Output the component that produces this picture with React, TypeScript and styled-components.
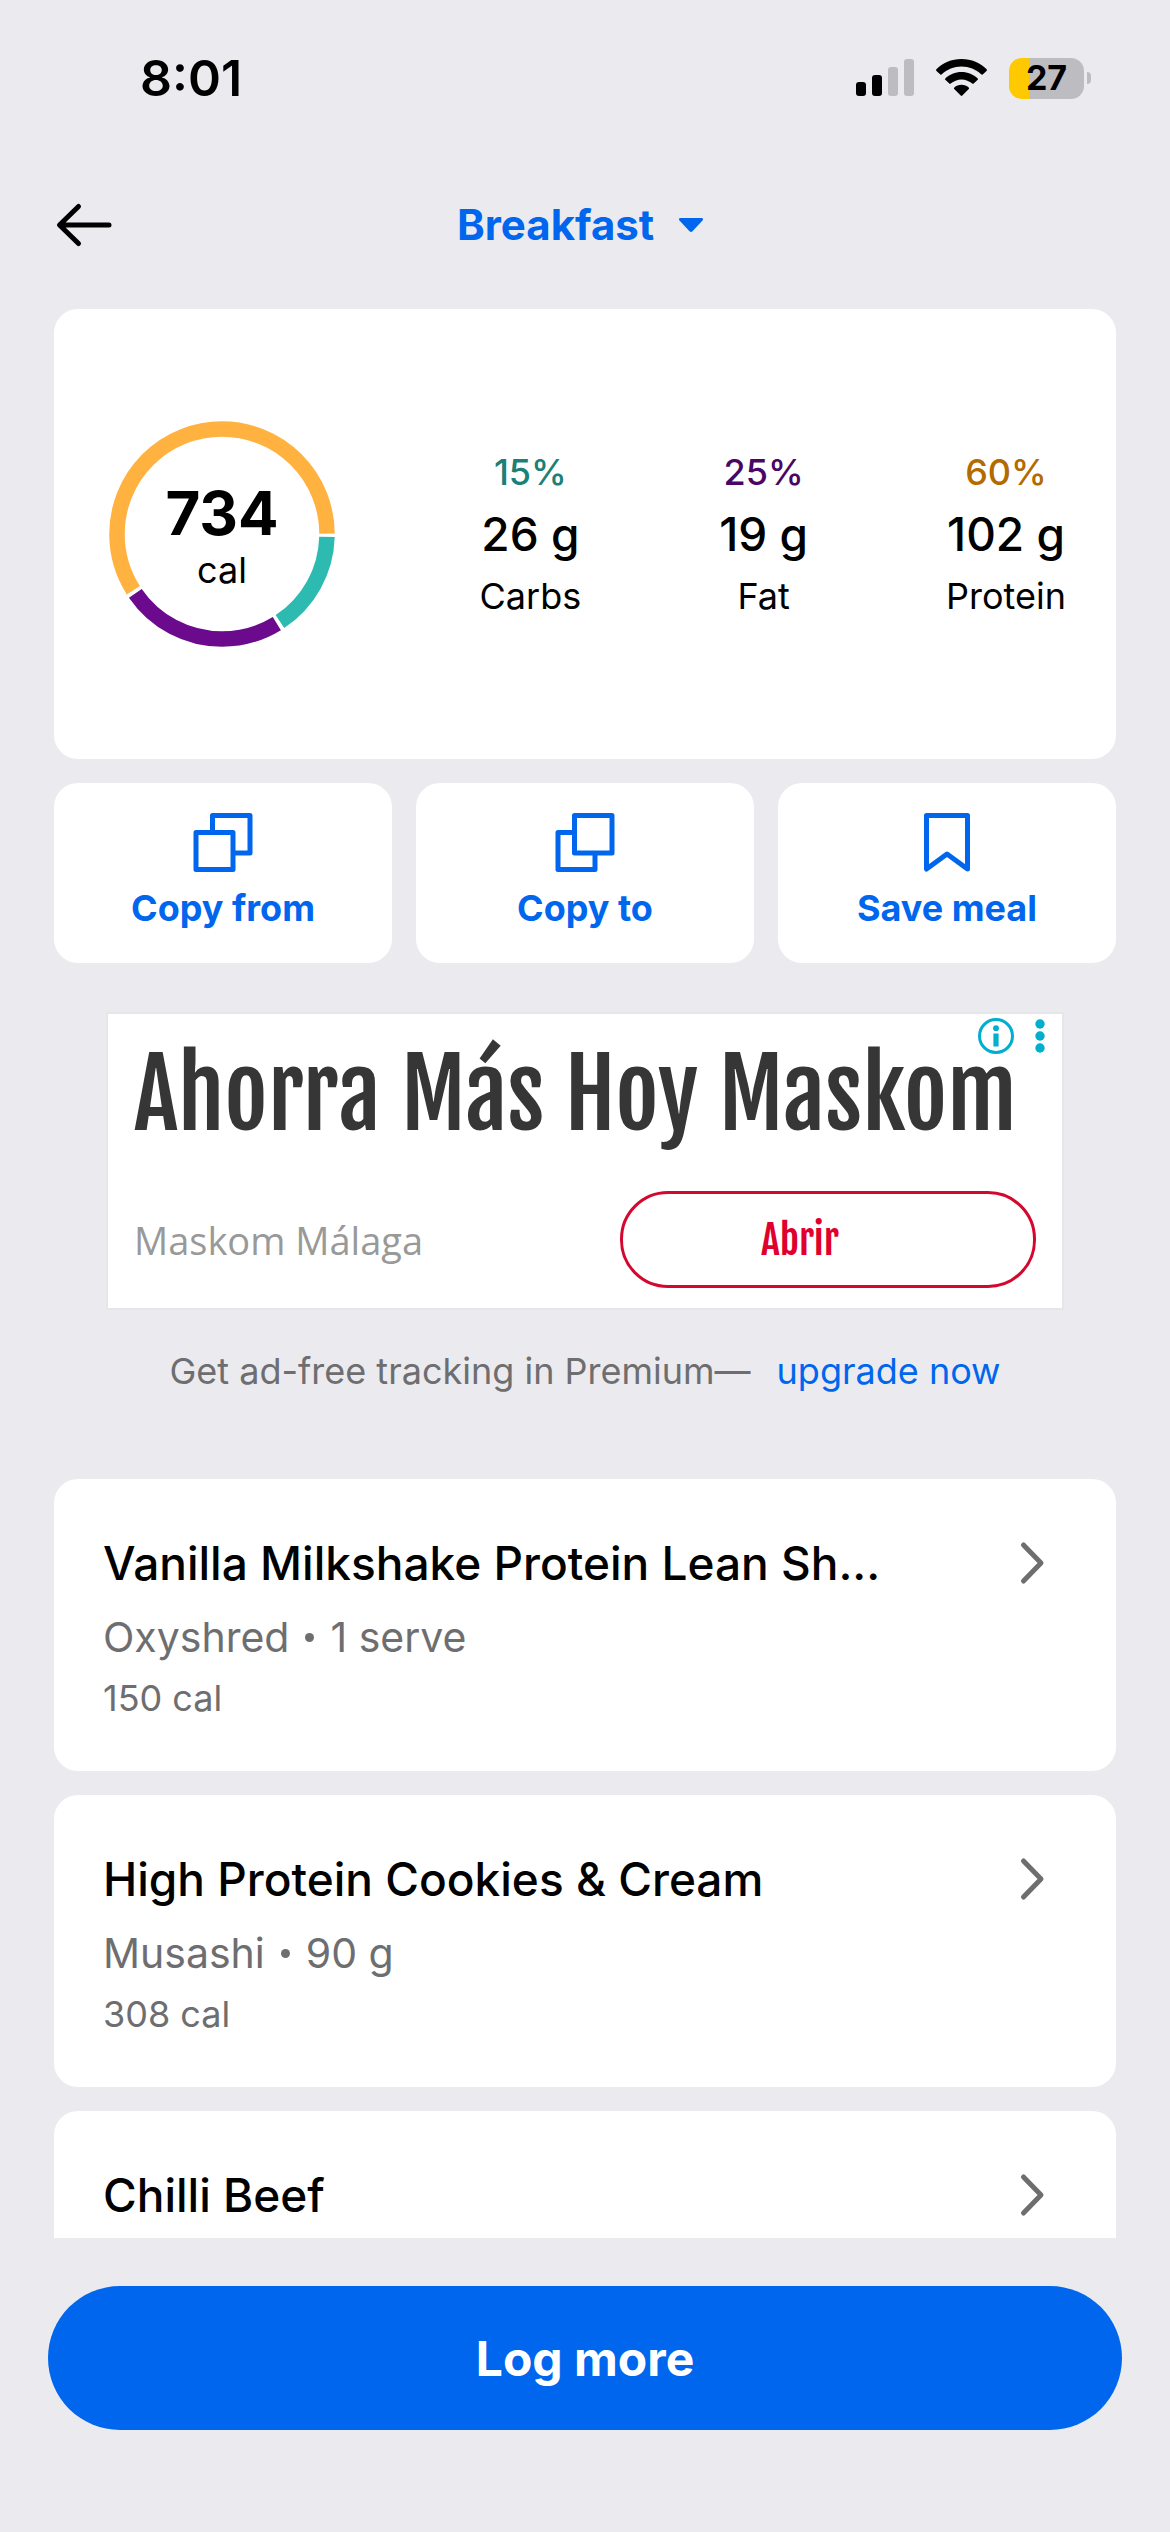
import React from "react";
import styled, { createGlobalStyle } from "styled-components";

const ink = "#000000";
const blue = "#0066ee";
const grey = "#6e6e70";
const canvas = "#ebebef";

const GlobalStyle = createGlobalStyle`
  *, *::before, *::after { box-sizing: border-box; }
  body {
    margin: 0;
    background: ${canvas};
    color: ${ink};
    font-family: Inter, "Liberation Sans", sans-serif;
  }
  button, select { font: inherit; color: inherit; }
`;

const Screen = styled.div`
  display: flex;
  flex-direction: column;
  height: 100vh;
  background: ${canvas};
`;

const StatusBar = styled.div`
  flex: none;
  display: flex;
  align-items: center;
  justify-content: space-between;
  height: 156px;
  padding: 0 79px 0 140px;
`;

const Clock = styled.time`
  font-size: 50px;
  line-height: 60px;
  font-weight: 600;
`;

const StatusIcons = styled.div`
  display: flex;
  align-items: center;
  gap: 22px;
`;

const Battery = styled.div`
  display: flex;
  align-items: center;
  gap: 3px;
`;

const BatteryBody = styled.div`
  display: flex;
  align-items: center;
  justify-content: center;
  width: 75px;
  height: 41px;
  border-radius: 13px;
  background: linear-gradient(to right, #ffc900 27%, #bdbdc1 27%);
  font-size: 34px;
  line-height: 40px;
  font-weight: 700;
`;

const BatteryTip = styled.div`
  width: 4px;
  height: 12px;
  border-radius: 0 6px 6px 0;
  background: #bdbdc1;
`;

const Header = styled.header`
  flex: none;
  display: grid;
  grid-template-columns: 1fr auto 1fr;
  align-items: center;
  height: 138px;
  padding: 0 54px;
`;

const BackButton = styled.button`
  display: flex;
  justify-self: start;
  padding: 0;
  border: 0;
  background: none;
`;

const MealPicker = styled.label`
  display: flex;
  align-items: center;
  gap: 14px;
  color: ${blue};
`;

const MealSelect = styled.select`
  appearance: none;
  padding: 0;
  border: 0;
  background: none;
  font-size: 42px;
  line-height: 52px;
  font-weight: 700;
`;

const Content = styled.main`
  flex: 1;
  min-height: 0;
  overflow-y: auto;
  scrollbar-width: none;
  padding: 15px 54px 0;
`;

const Summary = styled.section`
  display: flex;
  align-items: center;
  justify-content: space-between;
  padding: 112px 50px 112px 55px;
  border-radius: 24px;
  background: #ffffff;
`;

const Ring = styled.div`
  display: grid;
  place-items: center;
  > * { grid-area: 1 / 1; }
`;

const RingLabel = styled.div`
  text-align: center;
`;

const Calories = styled.div`
  font-size: 60px;
  line-height: 72px;
  font-weight: 700;
`;

const Unit = styled.div`
  font-size: 36px;
  line-height: 42px;
`;

const Macros = styled.div`
  display: flex;
  gap: 138px;
`;

const Macro = styled.div`
  text-align: center;
  line-height: 62px;
  font-size: 36px;
`;

const Percent = styled.div<{ $color: string }>`
  color: ${(p) => p.$color};
  font-weight: 500;
`;

const Grams = styled.div`
  font-size: 46px;
  font-weight: 500;
`;

const Actions = styled.div`
  display: grid;
  grid-template-columns: repeat(3, 1fr);
  gap: 24px;
  margin-top: 24px;
`;

const Action = styled.button`
  display: flex;
  flex-direction: column;
  align-items: center;
  gap: 12px;
  padding: 30px 0 32px;
  border: 0;
  border-radius: 24px;
  background: #ffffff;
  color: ${blue};
  font-size: 36px;
  line-height: 46px;
  font-weight: 700;
`;

const Ad = styled.aside`
  position: relative;
  margin: 49px 52px 0;
  padding: 19px 26px 20px;
  border: 2px solid #e6e6e8;
  background: #ffffff;
`;

const AdBadge = styled.div`
  position: absolute;
  top: 4px;
  right: 16px;
  display: flex;
  gap: 20px;
`;

const AdTitle = styled.h2`
  margin: 0;
  color: #363636;
  font-family: "Fjalla One", "Liberation Sans Narrow", "Liberation Sans", sans-serif;
  font-size: 94px;
  line-height: 122px;
  font-weight: 400;
  white-space: nowrap;
`;

const AdRow = styled.div`
  display: grid;
  grid-template-columns: 1fr 416px;
  align-items: center;
  margin-top: 36px;
`;

const Advertiser = styled.span`
  color: #999999;
  font-family: "Open Sans", sans-serif;
  font-size: 38px;
  line-height: 52px;
`;

const AdButton = styled.button`
  height: 97px;
  padding: 0 56px 0 0;
  border: 3px solid #d4082f;
  border-radius: 48px;
  background: #ffffff;
  color: #e0002d;
  font-family: "Fjalla One", "Liberation Sans Narrow", "Liberation Sans", sans-serif;
  font-size: 40px;
  font-weight: 400;
`;

const Upsell = styled.p`
  display: flex;
  justify-content: center;
  gap: 26px;
  margin: 37px 0 0;
  color: ${grey};
  font-size: 36px;
  line-height: 48px;
`;

const UpsellLink = styled.a`
  color: ${blue};
  text-decoration: none;
`;

const FoodList = styled.ul`
  display: flex;
  flex-direction: column;
  gap: 24px;
  margin: 84px 0 0;
  padding: 0;
  list-style: none;
`;

const FoodCard = styled.button`
  display: flex;
  justify-content: space-between;
  width: 100%;
  padding: 48px 70px 50px 49px;
  border: 0;
  border-radius: 24px;
  background: #ffffff;
  text-align: left;
`;

const FoodName = styled.div`
  font-size: 46px;
  line-height: 72px;
  font-weight: 500;
`;

const FoodDetail = styled.div`
  display: flex;
  align-items: center;
  gap: 16px;
  color: ${grey};
  font-size: 41px;
  line-height: 76px;
`;

const Dot = styled.span`
  width: 9px;
  height: 9px;
  border-radius: 50%;
  background: currentColor;
`;

const FoodCalories = styled.div`
  color: ${grey};
  font-size: 36px;
  line-height: 46px;
`;

const Footer = styled.footer`
  flex: none;
  padding: 48px 48px 102px;
`;

const LogButton = styled.button`
  width: 100%;
  height: 144px;
  border: 0;
  border-radius: 72px;
  background: #0066ee;
  color: #ffffff;
  font-size: 48px;
  font-weight: 700;
`;

const SignalIcon = () => (
  <svg width="58" height="38" viewBox="0 0 58 38" aria-hidden="true">
    <rect x="0" y="23" width="10" height="14" rx="3" fill="#000" />
    <rect x="16" y="16" width="10" height="21" rx="3" fill="#000" />
    <rect x="32" y="8" width="10" height="29" rx="3" fill="#bdbdc1" />
    <rect x="48" y="0" width="10" height="37" rx="3" fill="#bdbdc1" />
  </svg>
);

const WifiIcon = () => (
  <svg width="51" height="38" viewBox="0 0 51 38" aria-hidden="true">
    <path d="M25.500 0C35.500 0 44.500 4 50.600 10.300Q51.300 11.100 50.500 11.900L46.700 15.400Q45.900 16 45.200 15.300C40 10.300 33 7.400 25.500 7.400S11 10.300 5.800 15.300Q5.100 16 4.300 15.400L.5 11.900Q-.3 11.100.4 10.300C6.500 4 15.500 0 25.500 0Z" />
    <path d="M25.500 13C31.800 13 37.500 15.500 41.700 19.400Q42.400 20.100 41.700 20.800L37.700 24.600Q37 25.200 36.300 24.600C33.400 22 29.700 20.400 25.500 20.400S17.600 22 14.700 24.600Q14 25.200 13.300 24.600L9.300 20.800Q8.600 20.100 9.300 19.400C13.500 15.500 19.200 13 25.500 13Z" />
    <path d="M25.500 25.800C28.300 25.800 30.800 26.800 32.700 28.500Q33.500 29.200 32.800 30L26.300 36.600Q25.500 37.300 24.700 36.600L18.200 30Q17.500 29.200 18.300 28.500C20.200 26.800 22.700 25.800 25.500 25.800Z" />
  </svg>
);

const ArrowIcon = () => (
  <svg width="60" height="48" viewBox="0 0 60 48" fill="none" stroke="#000" strokeWidth="5" strokeLinecap="round" strokeLinejoin="round" aria-hidden="true">
    <path d="M55 24H6M24.500 5.500L5.500 24L24.500 42.500" />
  </svg>
);

const CaretIcon = () => (
  <svg width="44" height="44" viewBox="0 0 44 44" fill={blue} aria-hidden="true">
    <path d="M11.500 15H32.500Q35 15.200 33.500 17.400L23.500 28.300Q22 29.700 20.500 28.300L10.500 17.400Q9 15.200 11.500 15Z" />
  </svg>
);

const CopyFromIcon = () => (
  <svg width="60" height="60" viewBox="0 0 60 60" fill="none" stroke={blue} strokeWidth="5" strokeLinejoin="round" aria-hidden="true">
    <path d="M19.500 20V2.500H57V40H40" />
    <rect x="3" y="19.500" width="37" height="37" />
  </svg>
);

const CopyToIcon = () => (
  <svg width="60" height="60" viewBox="0 0 60 60" fill="none" stroke={blue} strokeWidth="5" strokeLinejoin="round" aria-hidden="true">
    <path d="M19.500 19.500H3V56.500H40V40" />
    <rect x="19.500" y="2.500" width="37.500" height="37.500" />
  </svg>
);

const BookmarkIcon = () => (
  <svg width="60" height="60" viewBox="0 0 60 60" fill="none" stroke={blue} strokeWidth="5" strokeLinejoin="round" aria-hidden="true">
    <path d="M9.500 2.500H50.500V56L30 41L9.500 56Z" />
  </svg>
);

const InfoIcon = () => (
  <svg width="36" height="36" viewBox="0 0 36 36" fill="#00aecd" aria-hidden="true">
    <circle cx="18" cy="18" r="16.500" fill="none" stroke="#00aecd" strokeWidth="3" />
    <circle cx="18" cy="10.200" r="2.900" />
    <rect x="15.400" y="15.500" width="5.200" height="13" />
  </svg>
);

const DotsIcon = () => (
  <svg width="12" height="36" viewBox="0 0 12 36" fill="#00aecd" aria-hidden="true">
    <circle cx="6" cy="6" r="4.700" />
    <circle cx="6" cy="18" r="4.700" />
    <circle cx="6" cy="30" r="4.700" />
  </svg>
);

const ChevronIcon = () => (
  <svg width="28" height="72" viewBox="0 0 28 72" fill="none" stroke={grey} strokeWidth="5" strokeLinecap="round" strokeLinejoin="round" aria-hidden="true">
    <path d="M5.500 18L23 36L5.500 54" />
  </svg>
);

const segments = [
  { color: "#2cbab1", start: 1.6, end: 56.5 },
  { color: "#6b0a8c", start: 58.5, end: 145.6 },
  { color: "#ffb23f", start: 147.6, end: 359.8 },
];

const MacroRing = () => (
  <svg width="226" height="226" viewBox="0 0 226 226" fill="none" strokeWidth="15.500" aria-hidden="true">
    {segments.map((s) => (
      <circle
        key={s.color}
        cx="113"
        cy="113"
        r="105"
        pathLength={360}
        stroke={s.color}
        strokeDasharray={`${s.end - s.start} 360`}
        strokeDashoffset={-s.start}
      />
    ))}
  </svg>
);

const macros = [
  { percent: "15%", grams: "26 g", name: "Carbs", color: "#1a8078" },
  { percent: "25%", grams: "19 g", name: "Fat", color: "#4a0664" },
  { percent: "60%", grams: "102 g", name: "Protein", color: "#b36a00" },
];

const actions = [
  { label: "Copy from", Icon: CopyFromIcon },
  { label: "Copy to", Icon: CopyToIcon },
  { label: "Save meal", Icon: BookmarkIcon },
];

const foods = [
  {
    name: "Vanilla Milkshake Protein Lean Sh...",
    facts: { brand: "Oxyshred", serving: "1 serve", calories: "150 cal" },
  },
  {
    name: "High Protein Cookies & Cream",
    facts: { brand: "Musashi", serving: "90 g", calories: "308 cal" },
  },
  { name: "Chilli Beef" },
];

export default function App() {
  return (
    <Screen>
      <GlobalStyle />
      <StatusBar>
        <Clock>8:01</Clock>
        <StatusIcons>
          <SignalIcon />
          <WifiIcon />
          <Battery>
            <BatteryBody>27</BatteryBody>
            <BatteryTip />
          </Battery>
        </StatusIcons>
      </StatusBar>
      <Header>
        <BackButton aria-label="Back">
          <ArrowIcon />
        </BackButton>
        <MealPicker>
          <MealSelect aria-label="Meal" defaultValue="Breakfast">
            <option>Breakfast</option>
            <option>Lunch</option>
            <option>Dinner</option>
            <option>Snacks</option>
          </MealSelect>
          <CaretIcon />
        </MealPicker>
      </Header>
      <Content>
        <Summary>
          <Ring>
            <MacroRing />
            <RingLabel>
              <Calories>734</Calories>
              <Unit>cal</Unit>
            </RingLabel>
          </Ring>
          <Macros>
            {macros.map((m) => (
              <Macro key={m.name}>
                <Percent $color={m.color}>{m.percent}</Percent>
                <Grams>{m.grams}</Grams>
                <div>{m.name}</div>
              </Macro>
            ))}
          </Macros>
        </Summary>
        <Actions>
          {actions.map(({ label, Icon }) => (
            <Action key={label}>
              <Icon />
              {label}
            </Action>
          ))}
        </Actions>
        <Ad>
          <AdBadge>
            <InfoIcon />
            <DotsIcon />
          </AdBadge>
          <AdTitle>Ahorra Más Hoy Maskom</AdTitle>
          <AdRow>
            <Advertiser>Maskom Málaga</Advertiser>
            <AdButton>Abrir</AdButton>
          </AdRow>
        </Ad>
        <Upsell>
          <span>Get ad-free tracking in Premium—</span>
          <UpsellLink href="#premium">upgrade now</UpsellLink>
        </Upsell>
        <FoodList>
          {foods.map(({ name, facts }) => (
            <li key={name}>
              <FoodCard>
                <div>
                  <FoodName>{name}</FoodName>
                  {facts && (
                    <>
                      <FoodDetail>
                        <span>{facts.brand}</span>
                        <Dot />
                        <span>{facts.serving}</span>
                      </FoodDetail>
                      <FoodCalories>{facts.calories}</FoodCalories>
                    </>
                  )}
                </div>
                <ChevronIcon />
              </FoodCard>
            </li>
          ))}
        </FoodList>
      </Content>
      <Footer>
        <LogButton>Log more</LogButton>
      </Footer>
    </Screen>
  );
}
